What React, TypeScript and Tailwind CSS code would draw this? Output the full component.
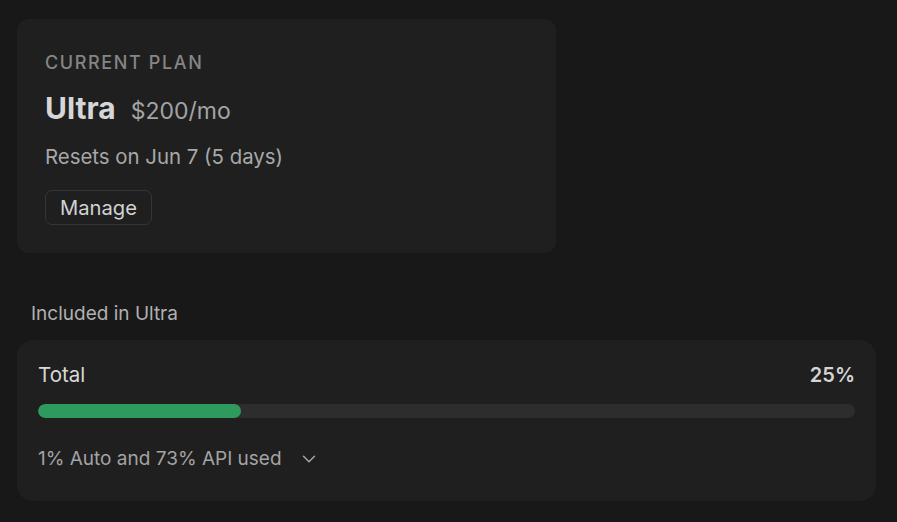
import React from 'react';
import { ChevronDown } from 'lucide-react';

function PlanCard() {
  return (
    <div className="w-[539px] rounded-[12px] bg-[#1f1f1f] px-[28px] pt-[32px] pb-[28px]">
      <div className="text-[18px] font-medium tracking-[0.09em] text-[#858585] leading-[24px]">
        CURRENT PLAN
      </div>
      <div className="mt-[15px] flex items-baseline gap-[15px] leading-[36px]">
        <span className="text-[30px] font-bold text-[#d6d6d6]">Ultra</span>
        <span className="text-[23px] text-[#a3a3a3]">$200/mo</span>
      </div>
      <div className="mt-[14px] text-[20.4px] text-[#a8a8a8] leading-[28px]">Resets on Jun 7 (5 days)</div>
      <button className="mt-[19px] h-[35px] rounded-[7px] border border-[#353535] px-[14px] text-[20.2px] leading-[28px] text-[#d2d2d2]">
        Manage
      </button>
    </div>
  );
}

function UsageCard() {
  const pct = 25;
  return (
    <div className="rounded-[16px] bg-[#1f1f1f] px-[21px] pt-[21px] pb-[28px]">
      <div className="flex items-center justify-between leading-[28px]">
        <span className="text-[20.5px] text-[#d8d8d8]">Total</span>
        <span className="text-[20px] font-semibold text-[#d4d4d4]">{pct}%</span>
      </div>
      <div className="mt-[15px] h-[14px] w-full rounded-full bg-[#2d2d2d] overflow-hidden">
        <div className="h-full rounded-full bg-[#2f9a5e]" style={{ width: `${pct * 0.995}%` }} />
      </div>
      <div className="mt-[27px] flex items-center gap-[16px] text-[19px] text-[#a3a3a3] leading-[28px]">
        <span>1% Auto and 73% API used</span>
        <ChevronDown size={22} strokeWidth={1.7} className="text-[#a3a3a3]" />
      </div>
    </div>
  );
}

export default function App() {
  return (
    <div
      className="min-h-screen bg-[#181818] pl-[17px] pr-[21px] pt-[19px]"
      style={{ fontFamily: 'Inter, "Noto Sans", sans-serif' }}
    >
      <PlanCard />
      <div className="mt-[48px] pl-[14px] text-[19px] text-[#b0b0b0] leading-[26px]">Included in Ultra</div>
      <div className="mt-[13px]">
        <UsageCard />
      </div>
    </div>
  );
}
